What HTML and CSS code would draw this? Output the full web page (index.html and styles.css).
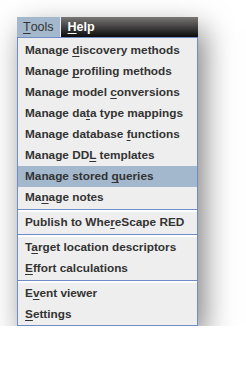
FILE: index.html
```html
<!DOCTYPE html>
<html lang="en">
<head>
    <meta charset="UTF-8">
    <title>Tools menu</title>
    <link rel="stylesheet" href="styles.css">
</head>
<body>
    <div class="menu">
        <div class="menubar">
            <span class="top open"><u>T</u>ools</span>
            <span class="top"><u>H</u>elp</span>
        </div>
        <div class="dropdown">
            <div class="item">Manage <u>d</u>iscovery methods</div>
            <div class="item">Manage <u>p</u>rofiling methods</div>
            <div class="item">Manage model <u>c</u>onversions</div>
            <div class="item">Manage da<u>t</u>a type mappings</div>
            <div class="item">Manage database <u>f</u>unctions</div>
            <div class="item">Manage DD<u>L</u> templates</div>
            <div class="item selected">Manage stored <u>q</u>ueries</div>
            <div class="item">Ma<u>n</u>age notes</div>
            <div class="sep"></div>
            <div class="item">Publish to Whe<u>r</u>eScape RED</div>
            <div class="sep"></div>
            <div class="item">T<u>a</u>rget location descriptors</div>
            <div class="item"><u>E</u>ffort calculations</div>
            <div class="sep"></div>
            <div class="item">E<u>v</u>ent viewer</div>
            <div class="item"><u>S</u>ettings</div>
        </div>
    </div>
</body>
</html>
```

FILE: styles.css
```css
body {
    margin: 0;
    padding: 17px 0 0 17px;
    background: #fff;
    font-family: "Liberation Sans", Arial, sans-serif;
    font-size: 11.8px;
    font-weight: bold;
    color: #333;
}
.menu {
    width: 181px;
    box-shadow: 6px 12px 28px rgba(0, 0, 0, 0.5);
}
.menubar {
    display: flex;
    height: 20px;
    background: linear-gradient(#7a7676, #0c0c0c);
}
.top {
    display: flex;
    align-items: center;
    padding: 0 7px;
    color: #fff;
    font-size: 12.5px;
    font-weight: bold;
}
.top.open {
    padding: 0 6px 0 6px;
    background: #a3b8cc;
    color: #333;
    font-weight: normal;
    border-right: 1px solid #e8eef4;
}
.dropdown {
    background: #eee;
    border: 1px solid #6f8bc8;
    padding-top: 2px;
}
.item {
    height: 21px;
    line-height: 21px;
    padding-left: 7px;
    white-space: nowrap;
}
.item.selected {
    background: #a3b8cc;
}
.sep {
    box-sizing: border-box;
    height: 3px;
    margin-top: 1px;
    border-top: 1px solid #6f8bc8;
    border-bottom: 2px solid #fff;
}
u {
    text-underline-offset: 2px;
}
```
